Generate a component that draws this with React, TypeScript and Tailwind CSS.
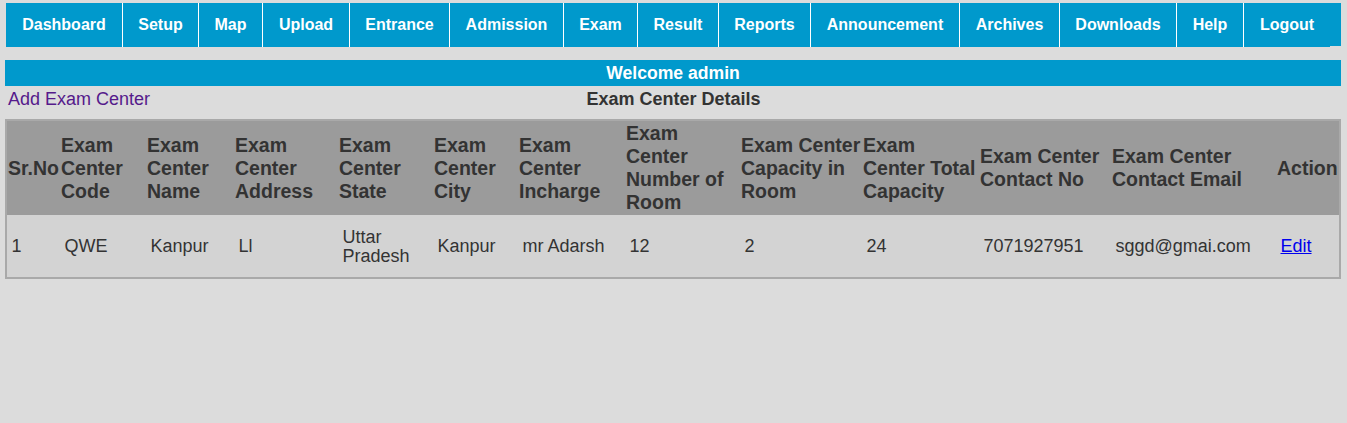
import React from "react";

const navItems: { label: string; cls: string }[] = [
  { label: "Dashboard", cls: "w-[117px] border-r" },
  { label: "Setup", cls: "w-[76px] border-r" },
  { label: "Map", cls: "w-[64px] border-r" },
  { label: "Upload", cls: "w-[87px] border-r" },
  { label: "Entrance", cls: "w-[100px] border-r" },
  { label: "Admission", cls: "w-[114px] border-r" },
  { label: "Exam", cls: "w-[74px] border-r" },
  { label: "Result", cls: "w-[81px] border-r" },
  { label: "Reports", cls: "w-[92px] border-r" },
  { label: "Announcement", cls: "w-[149px] border-r" },
  { label: "Archives", cls: "w-[100px] border-r" },
  { label: "Downloads", cls: "w-[117px] border-r" },
  { label: "Help", cls: "w-[67px] border-r" },
  { label: "Logout", cls: "w-[86px]" },
];

const columns: { label: string; width: number; value: React.ReactNode }[] = [
  { label: "Sr.No", width: 53, value: "1" },
  { label: "Exam Center Code", width: 86, value: "QWE" },
  { label: "Exam Center Name", width: 88, value: "Kanpur" },
  { label: "Exam Center Address", width: 104, value: "Ll" },
  { label: "Exam Center State", width: 95, value: "Uttar Pradesh" },
  { label: "Exam Center City", width: 85, value: "Kanpur" },
  { label: "Exam Center Incharge", width: 107, value: "mr Adarsh" },
  { label: "Exam Center Number of Room", width: 115, value: "12" },
  { label: "Exam Center Capacity in Room", width: 122, value: "2" },
  { label: "Exam Center Total Capacity", width: 117, value: "24" },
  { label: "Exam Center Contact No", width: 132, value: "7071927951" },
  { label: "Exam Center Contact Email", width: 165, value: "sggd@gmai.com" },
  {
    label: "Action",
    width: 63,
    value: (
      <a href="#" className="text-[#0000ee] underline">
        Edit
      </a>
    ),
  },
];

export default function App() {
  return (
    <div className="min-h-[423px] bg-[#dcdcdc] font-['Liberation_Sans',Arial,sans-serif] text-[#333]">
      <div className="pt-[3px] px-[6px]">
        <nav className="flex h-[43px] bg-[#0099cc]">
          {navItems.map((item) => (
            <a
              key={item.label}
              href="#"
              className={`flex h-[44px] shrink-0 items-center justify-center bg-[#0099cc] text-[16px] font-bold text-white border-white ${item.cls}`}
            >
              {item.label}
            </a>
          ))}
        </nav>
      </div>

      <div className="ml-[5px] mr-[6px] mt-[14px] h-[26px] bg-[#0099cc] text-center text-[17.6px] font-bold leading-[26px] text-white">
        Welcome admin
      </div>

      <div className="grid h-[26px] grid-cols-[1fr_auto_1fr] items-center px-[8px]">
        <a href="#" className="text-[18px] leading-[22px] text-[#551a8b]">
          Add Exam Center
        </a>
        <div className="text-[18px] font-bold leading-[22px] text-[#333]">
          Exam Center Details
        </div>
        <div />
      </div>

      <div className="ml-[5px] mt-[7px]">
        <table className="w-[1336px] table-fixed border-separate border-spacing-0 border-2 border-[#a9a9a9]">
          <colgroup>
            {columns.map((c) => (
              <col key={c.label} style={{ width: c.width }} />
            ))}
          </colgroup>
          <thead>
            <tr className="h-[94px] bg-[#9b9b9b]">
              {columns.map((c, i) => (
                <th
                  key={c.label}
                  className={`pl-px pr-0 py-px text-left align-middle text-[19.5px] font-bold leading-[23px] text-[#333] ${
                    i === 0 ? "whitespace-nowrap" : ""
                  }`}
                >
                  {c.label}
                </th>
              ))}
            </tr>
          </thead>
          <tbody>
            <tr className="h-[62px] bg-[#d3d3d3]">
              {columns.map((c) => (
                <td
                  key={c.label}
                  className="pl-[4.5px] pr-0 pt-[2px] align-middle text-[18px] leading-[19.5px] text-[#333]"
                >
                  {c.value}
                </td>
              ))}
            </tr>
          </tbody>
        </table>
      </div>
    </div>
  );
}
